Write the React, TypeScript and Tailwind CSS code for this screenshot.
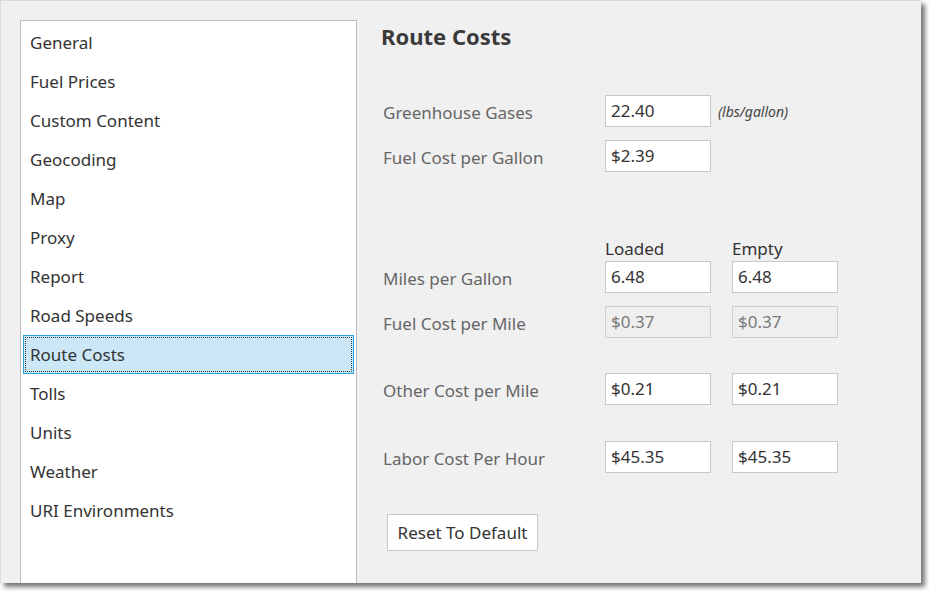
import React from "react";

const items = [
  "General",
  "Fuel Prices",
  "Custom Content",
  "Geocoding",
  "Map",
  "Proxy",
  "Report",
  "Road Speeds",
  "Route Costs",
  "Tolls",
  "Units",
  "Weather",
  "URI Environments",
];

const font = { fontFamily: '"Segoe UI", "Noto Sans", "Open Sans", sans-serif' };

function Box({ v, disabled }: { v: string; disabled?: boolean }) {
  return (
    <div
      className={
        "w-[106px] h-[32px] border flex items-center pl-[5px] text-[17px] " +
        (disabled
          ? "bg-[#efefef] border-[#cfcfcf] text-[#7a7a7a]"
          : "bg-white border-[#c8c8c8] text-[#333]")
      }
    >
      {v}
    </div>
  );
}

function Row({
  label,
  a,
  b,
  disabled,
  extra,
  mt,
}: {
  label: string;
  a: string;
  b?: string;
  disabled?: boolean;
  extra?: React.ReactNode;
  mt: string;
}) {
  return (
    <div className={"flex items-center " + mt}>
      <div className="w-[224px] pl-[2px] pt-[3px] text-[17px] text-[#666]">{label}</div>
      <Box v={a} disabled={disabled} />
      {b !== undefined && (
        <div className="ml-[21px]">
          <Box v={b} disabled={disabled} />
        </div>
      )}
      {extra}
    </div>
  );
}

export default function App() {
  return (
    <div className="w-[929px] h-[591px] bg-white" style={font}>
      <div className="w-[921px] h-[583px] bg-[#f0f0f0] border-t border-l border-[#dadada] shadow-[4px_4px_5px_rgba(0,0,0,0.55)] flex pl-[19px] pt-[19px]">
        <div className="w-[337px] h-full bg-white border-t border-l border-r border-[#bcbcbc] pt-[2px] px-[2px] text-[17px] text-[#333]">
          {items.map((it) => (
            <div
              key={it}
              className={
                "h-[39px] flex items-center pl-[6px] " +
                (it === "Route Costs"
                  ? "bg-[#cce8f7] border border-[#26a0da] outline-1 outline-dotted outline-[#333] -outline-offset-[3px]"
                  : "border border-transparent")
              }
            >
              {it}
            </div>
          ))}
        </div>
        <div className="flex-1 pl-[24px]">
          <div className="mt-[1px] h-[30px] flex items-center text-[22px] font-bold text-[#3a3a3a]">
            Route Costs
          </div>
          <Row
            mt="mt-[44px]"
            label="Greenhouse Gases"
            a="22.40"
            extra={<span className="ml-[7px] text-[14px] italic text-[#444]">(lbs/gallon)</span>}
          />
          <Row mt="mt-[13px]" label="Fuel Cost per Gallon" a="$2.39" />
          <div className="flex mt-[65px] h-[24px] items-center text-[17px] text-[#333]">
            <div className="w-[224px]" />
            <div className="w-[127px]">Loaded</div>
            <div>Empty</div>
          </div>
          <Row mt="mt-[0px]" label="Miles per Gallon" a="6.48" b="6.48" />
          <Row mt="mt-[13px]" label="Fuel Cost per Mile" a="$0.37" b="$0.37" disabled />
          <Row mt="mt-[35px]" label="Other Cost per Mile" a="$0.21" b="$0.21" />
          <Row mt="mt-[36px]" label="Labor Cost Per Hour" a="$45.35" b="$45.35" />
          <button className="mt-[41px] ml-[6px] w-[151px] h-[37px] bg-white border border-[#c8c8c8] text-[17px] text-[#333]">
            Reset To Default
          </button>
        </div>
      </div>
    </div>
  );
}
